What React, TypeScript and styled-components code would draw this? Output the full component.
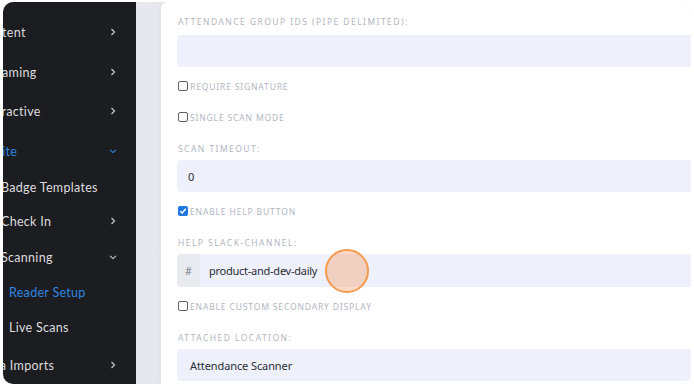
import styled, { createGlobalStyle } from "styled-components";

type NavItemType = {
  label: string;
  level: 1 | 2 | 3;
  active?: boolean;
  chevron?: "right" | "down";
  top: number;
};

const navItems: NavItemType[] = [
  { label: "Content", level: 1, chevron: "right", top: 22 },
  { label: "Streaming", level: 1, chevron: "right", top: 24 },
  { label: "Interactive", level: 1, chevron: "right", top: 23 },
  { label: "Onsite", level: 1, chevron: "down", active: true, top: 24 },
  { label: "Badge Templates", level: 2, top: 20 },
  { label: "Check In", level: 2, chevron: "right", top: 18 },
  { label: "Scanning", level: 2, chevron: "down", top: 20 },
  { label: "Reader Setup", level: 3, active: true, top: 19 },
  { label: "Live Scans", level: 3, top: 19 },
  { label: "Data Imports", level: 1, chevron: "right", top: 22 },
];

export default function App() {
  return (
    <>
      <GlobalStyle />
      <SFrame>
        <SSidebar>
          <SNav>
            {navItems.map((item) => (
              <SNavItem
                key={item.label}
                $level={item.level}
                $active={item.active}
                $top={item.top}
              >
                <span>{item.label}</span>
                {item.chevron && (
                  <Chevron dir={item.chevron} active={item.active} />
                )}
              </SNavItem>
            ))}
          </SNav>
        </SSidebar>
        <SMain>
          <SCard>
            <SLabel>Attendance Group IDs (pipe delimited):</SLabel>
            <SInput />
            <CheckRow label="Require Signature" first />
            <CheckRow label="Single Scan Mode" />

            <SLabel $spaced>Scan Timeout:</SLabel>
            <SInput>0</SInput>
            <CheckRow label="Enable Help Button" checked first />

            <SLabel $spaced>Help Slack-Channel:</SLabel>
            <SInputGroup>
              <SAddon>#</SAddon>
              <SGroupInput>product-and-dev-daily</SGroupInput>
              <SClickMark />
            </SInputGroup>
            <CheckRow label="Enable Custom Secondary Display" first />

            <SLabel $spaced>Attached Location:</SLabel>
            <SInput $pad={13}>Attendance Scanner</SInput>
          </SCard>
        </SMain>
      </SFrame>
    </>
  );
}

function Chevron({ dir, active }: { dir: "right" | "down"; active?: boolean }) {
  const color = active ? "#2f86e0" : "#c9c9cc";
  return (
    <SChevron width="10" height="10" viewBox="0 0 10 10">
      {dir === "right" ? (
        <path d="M3.5 2 L6.5 5 L3.5 8" stroke={color} strokeWidth="1.2" fill="none" />
      ) : (
        <path d="M2 3.8 L5 6.6 L8 3.8" stroke={color} strokeWidth="1.1" fill="none" />
      )}
    </SChevron>
  );
}

function CheckRow({
  label,
  checked,
  first,
}: {
  label: string;
  checked?: boolean;
  first?: boolean;
}) {
  return (
    <SCheckRow $first={first}>
      <SBox $checked={checked}>
        {checked && (
          <svg width="8" height="8" viewBox="0 0 8 8">
            <path d="M1.3 4.2 L3.2 6 L6.8 1.8" stroke="#fff" strokeWidth="1.5" fill="none" />
          </svg>
        )}
      </SBox>
      <SCheckText>{label}</SCheckText>
    </SCheckRow>
  );
}

const GlobalStyle = createGlobalStyle`
  html, body {
    margin: 0;
    padding: 0;
    background: #ffffff;
  }
  body {
    font-family: "Noto Sans", "Open Sans", sans-serif;
  }
`;

const SFrame = styled.div`
  box-sizing: border-box;
  margin: 2px 0 0 3px;
  width: 688px;
  height: 382px;
  border-radius: 10px;
  overflow: hidden;
  display: flex;
  background: #e9eaef;
`;

const SSidebar = styled.aside`
  width: 133px;
  flex-shrink: 0;
  background: #1c1d20;
  overflow: hidden;
`;

/* the screenshot crops the left part of the menu */
const SNav = styled.nav`
  display: flex;
  flex-direction: column;
  margin-left: -27px;
  width: 160px;
`;

const SNavItem = styled.div<{ $level: number; $active?: boolean; $top: number }>`
  display: flex;
  align-items: center;
  justify-content: space-between;
  height: 16px;
  margin-top: ${(p) => p.$top}px;
  padding-left: ${(p) => (p.$level === 1 ? 3 : p.$level === 2 ? 25 : 33)}px;
  padding-right: 18px;
  font-family: Lato, "Noto Sans", sans-serif;
  font-size: 12.5px;
  letter-spacing: 0.3px;
  color: ${(p) => (p.$active ? "#2f86e0" : "#dcdcdf")};
  white-space: nowrap;
`;

const SChevron = styled.svg`
  flex-shrink: 0;
`;

const SMain = styled.main`
  flex: 1;
  display: flex;
  padding-left: 25px;
  background: linear-gradient(90deg, #e7e8ed 0%, #eeeff3 100%);
`;

const SCard = styled.section`
  flex: 1;
  display: flex;
  flex-direction: column;
  background: #ffffff;
  border-radius: 6px 0 0 0;
  box-shadow: 0 0 6px rgba(30, 40, 70, 0.06);
  padding: 14px 0 0 16px;
`;

const SLabel = styled.label<{ $spaced?: boolean }>`
  display: block;
  height: 12px;
  line-height: 12px;
  margin: ${(p) => (p.$spaced ? "19px 0 5px 1px" : "0 0 7px 1px")};
  font-size: 8.5px;
  letter-spacing: 1.45px;
  text-transform: uppercase;
  color: #b2b6c2;
`;

const SInput = styled.div<{ $pad?: number }>`
  box-sizing: border-box;
  height: 32px;
  display: flex;
  align-items: center;
  padding-left: ${(p) => p.$pad ?? 11}px;
  background: #eef0fc;
  border-radius: 4px 0 0 4px;
  font-size: 11px;
  letter-spacing: -0.1px;
  color: #2b2d33;
`;

const SInputGroup = styled.div`
  position: relative;
  display: flex;
  height: 33px;
`;

const SAddon = styled.div`
  width: 23px;
  display: flex;
  align-items: center;
  justify-content: center;
  background: #e8eaf0;
  border-radius: 4px 0 0 4px;
  font-size: 10.5px;
  color: #7c7f88;
`;

const SGroupInput = styled.div`
  flex: 1;
  display: flex;
  align-items: center;
  padding-left: 9px;
  background: #eef0fc;
  font-size: 11px;
  letter-spacing: -0.25px;
  color: #2b2d33;
`;

const SClickMark = styled.div`
  position: absolute;
  left: 148px;
  top: -5px;
  width: 40px;
  height: 40px;
  border-radius: 50%;
  border: 2px solid #f39a4c;
  background: rgba(246, 164, 112, 0.42);
`;

const SCheckRow = styled.div<{ $first?: boolean }>`
  display: flex;
  align-items: center;
  height: 14px;
  margin-top: ${(p) => (p.$first ? 12 : 17)}px;
  margin-left: 1px;
`;

const SBox = styled.span<{ $checked?: boolean }>`
  box-sizing: border-box;
  width: 10px;
  height: 10px;
  margin-right: 2px;
  border-radius: 2px;
  display: flex;
  align-items: center;
  justify-content: center;
  border: ${(p) => (p.$checked ? "none" : "1px solid #5f6168")};
  background: ${(p) => (p.$checked ? "#1f78e6" : "#ffffff")};
`;

const SCheckText = styled.span`
  font-size: 8.5px;
  letter-spacing: 0.85px;
  text-transform: uppercase;
  color: #b2b6c2;
  line-height: 12px;
  padding-top: 2px;
`;
